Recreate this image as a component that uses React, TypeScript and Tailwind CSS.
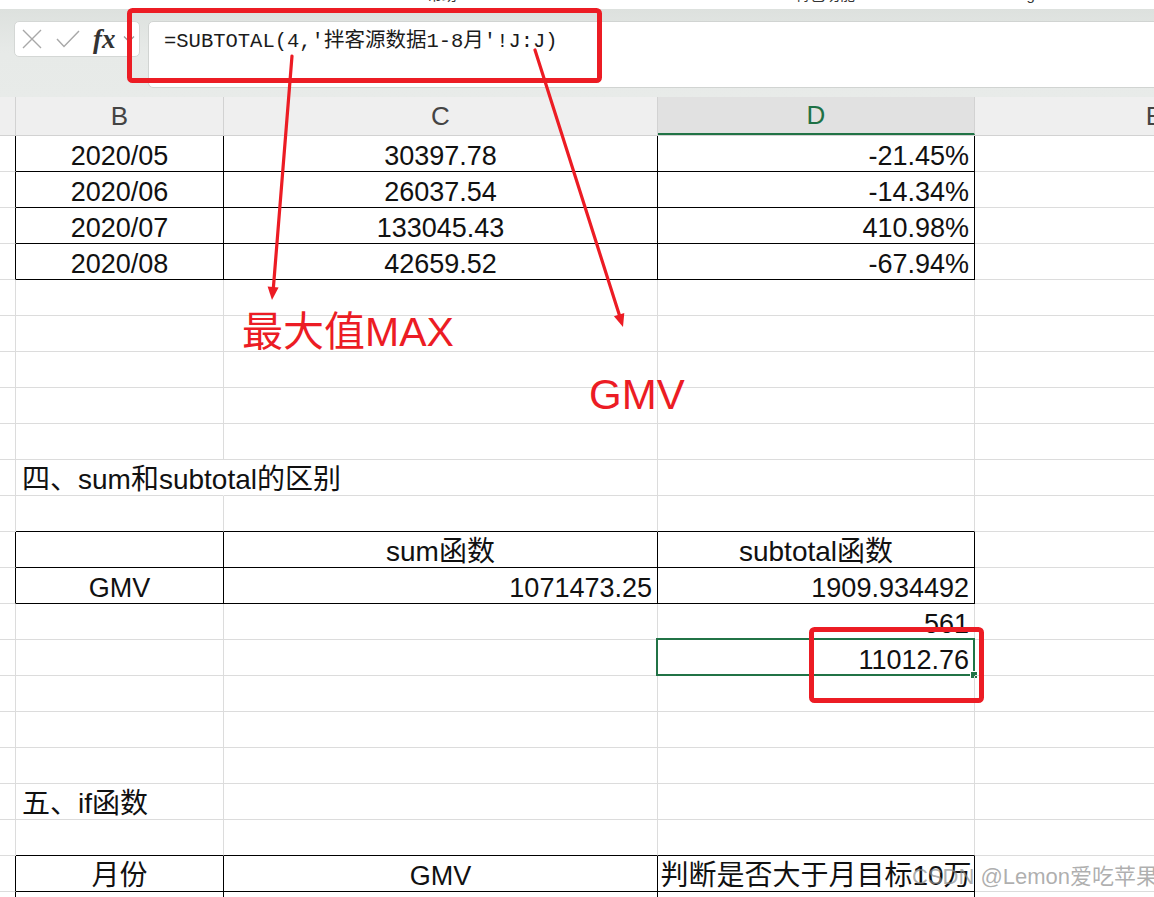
import React from 'react'

type Align = 'left' | 'center' | 'right'
type Cell = { text: string; align: Align; cjk?: boolean; spill?: boolean }

// column widths A..E, the first one scrolled almost out of view
const COLS = [16, 208, 434, 317, 360]
const LETTERS = ['', 'B', 'C', 'D', 'E']
const ROWS = 22

const sheet: Record<number, Record<number, Cell>> = {
  0: {
    1: { text: '2020/05', align: 'center' },
    2: { text: '30397.78', align: 'center' },
    3: { text: '-21.45%', align: 'right' },
  },
  1: {
    1: { text: '2020/06', align: 'center' },
    2: { text: '26037.54', align: 'center' },
    3: { text: '-14.34%', align: 'right' },
  },
  2: {
    1: { text: '2020/07', align: 'center' },
    2: { text: '133045.43', align: 'center' },
    3: { text: '410.98%', align: 'right' },
  },
  3: {
    1: { text: '2020/08', align: 'center' },
    2: { text: '42659.52', align: 'center' },
    3: { text: '-67.94%', align: 'right' },
  },
  9: { 1: { text: '四、sum和subtotal的区别', align: 'left', cjk: true, spill: true } },
  11: {
    2: { text: 'sum函数', align: 'center', cjk: true },
    3: { text: 'subtotal函数', align: 'center', cjk: true },
  },
  12: {
    1: { text: 'GMV', align: 'center' },
    2: { text: '1071473.25', align: 'right' },
    3: { text: '1909.934492', align: 'right' },
  },
  13: { 3: { text: '561', align: 'right' } },
  14: { 3: { text: '11012.76', align: 'right' } },
  18: { 1: { text: '五、if函数', align: 'left', cjk: true } },
  20: {
    1: { text: '月份', align: 'center', cjk: true },
    2: { text: 'GMV', align: 'center' },
    3: { text: '判断是否大于月目标10万', align: 'center', cjk: true },
  },
}

// bordered ranges [r0, r1, c0, c1]
const tables = [
  [0, 3, 1, 3],
  [11, 12, 1, 3],
  [20, 21, 1, 3],
]

const inTable = (r: number, c: number) =>
  tables.some(([r0, r1, c0, c1]) => r >= r0 && r <= r1 && c >= c0 && c <= c1)

const SELECTED = { r: 14, c: 3 }

const alignClass: Record<Align, string> = {
  left: 'justify-start pl-[6px]',
  center: 'justify-center',
  right: 'justify-end pr-[5px]',
}

function SheetCell({ r, c }: { r: number; c: number }) {
  const cell = sheet[r]?.[c]
  const right = cell?.spill
    ? 'border-r-transparent'
    : inTable(r, c) || inTable(r, c + 1)
      ? 'border-r-black'
      : 'border-r-[#dcdcdc]'
  const bottom = inTable(r, c) || inTable(r + 1, c) ? 'border-b-black' : 'border-b-[#dcdcdc]'
  const selected = SELECTED.r === r && SELECTED.c === c
  return (
    <div
      className={`relative flex h-full shrink-0 items-end border-r border-b pb-[1px] ${right} ${bottom} ${
        cell ? alignClass[cell.align] : ''
      }`}
      style={{ width: COLS[c] }}
    >
      {cell && (
        <span
          className={`whitespace-nowrap leading-none text-[#111] ${cell.cjk ? 'text-[28px]' : 'text-[27px]'}`}
        >
          {cell.text}
        </span>
      )}
      {selected && (
        <>
          <div className="absolute -top-[2px] -left-[2px] -right-[1px] -bottom-[1px] border-2 border-[#217346]" />
          <div className="absolute -right-[4px] -bottom-[4px] h-[8px] w-[8px] border border-white bg-[#217346]" />
        </>
      )}
    </div>
  )
}

function NameBox() {
  return (
    <div className="ml-[14px] flex h-[36px] w-[126px] shrink-0 items-center rounded-[5px] border border-[#d4d7d5] bg-white">
      <svg width="20" height="20" viewBox="0 0 20 20" className="ml-[7px]">
        <path d="M1 1L19 19M19 1L1 19" stroke="#a8a8a8" strokeWidth="1.4" fill="none" />
      </svg>
      <svg width="24" height="18" viewBox="0 0 24 18" className="ml-[14px]">
        <path d="M1 9L8 16.5L23 1" stroke="#a8a8a8" strokeWidth="1.4" fill="none" />
      </svg>
      <span className="ml-[13px] font-['Liberation_Serif',serif] text-[27px] font-semibold italic leading-none text-[#333]">
        fx
      </span>
      <svg width="12" height="8" viewBox="0 0 12 8" className="ml-[7px]">
        <path d="M1 1.5L6 6.5L11 1.5" stroke="#9a9a9a" strokeWidth="1.3" fill="none" />
      </svg>
    </div>
  )
}

export default function App() {
  return (
    <div className="relative h-[897px] w-[1154px] overflow-hidden bg-white font-['Liberation_Sans','Noto_Sans_CJK_SC',sans-serif]">
      {/* ribbon tab labels, scrolled up out of view */}
      <div className="flex h-[9px] overflow-hidden bg-white text-[15px] leading-none text-[#333]">
        <span className="ml-[427px] -mt-[13px]">帮助</span>
        <span className="ml-[338px] -mt-[13px]">特色功能</span>
        <span className="ml-[128px] -mt-[13px]">Sharing</span>
      </div>

      {/* formula bar */}
      <div className="flex h-[88px] items-start bg-gradient-to-b from-[#dde1de] via-[#e7eae8] to-[#e8ebe9] pt-[12px]">
        <NameBox />
        <div className="-mr-[20px] ml-[8px] flex h-[67px] flex-1 items-start rounded-[5px] border border-[#d1d4d2] bg-white pl-[15px] pt-[8px]">
          <span className="font-['Liberation_Mono','Noto_Sans_CJK_SC',monospace] text-[20.5px] leading-[24px] text-[#1b1b1b]">
            =SUBTOTAL(4,'拌客源数据1-8月'!J:J)
          </span>
        </div>
      </div>

      {/* column headers */}
      <div className="flex h-[39px] border-b border-[#d2d2d2] bg-[#efefef]">
        {COLS.map((w, c) => (
          <div
            key={c}
            className={`flex h-full shrink-0 items-center justify-center border-r border-[#d2d2d2] text-[26px] ${
              c === 3 ? 'border-b-2 border-b-[#217346] bg-[#e1e1e1] text-[#1e7145]' : 'text-[#444]'
            }`}
            style={{ width: w }}
          >
            {LETTERS[c]}
          </div>
        ))}
      </div>

      {/* cells */}
      {Array.from({ length: ROWS }, (_, r) => (
        <div key={r} className="flex h-[36px]">
          {COLS.map((_, c) => (
            <SheetCell key={c} r={r} c={c} />
          ))}
        </div>
      ))}

      {/* red markup drawn over the sheet */}
      <svg className="pointer-events-none absolute inset-0" width="1154" height="897" viewBox="0 0 1154 897">
        <g stroke="#ec1c24" fill="none" strokeWidth="5">
          <rect x="129.5" y="10.5" width="470" height="70" rx="3" />
          <rect x="811.5" y="629.5" width="170" height="71" rx="3" />
        </g>
        <g stroke="#ec1c24" strokeWidth="3.2" strokeLinecap="round">
          <line x1="292" y1="56" x2="273.2" y2="290" />
          <line x1="535" y1="50" x2="620" y2="317" />
        </g>
        <g fill="#ec1c24">
          <polygon points="272,300 278.6,287.5 267.6,286.5" />
          <polygon points="623,327 624.3,312.9 613.9,316.3" />
        </g>
      </svg>
      <div className="absolute left-[242px] top-[312px] whitespace-nowrap text-[41px] leading-none text-[#ec1c24]">
        最大值MAX
      </div>
      <div className="absolute left-[589px] top-[374px] whitespace-nowrap text-[42px] leading-none text-[#ec1c24]">
        GMV
      </div>
      <div className="absolute left-[912px] top-[866px] whitespace-nowrap text-[22px] leading-none text-[#8c8c8c]/70">
        CSDN @Lemon爱吃苹果
      </div>
    </div>
  )
}
